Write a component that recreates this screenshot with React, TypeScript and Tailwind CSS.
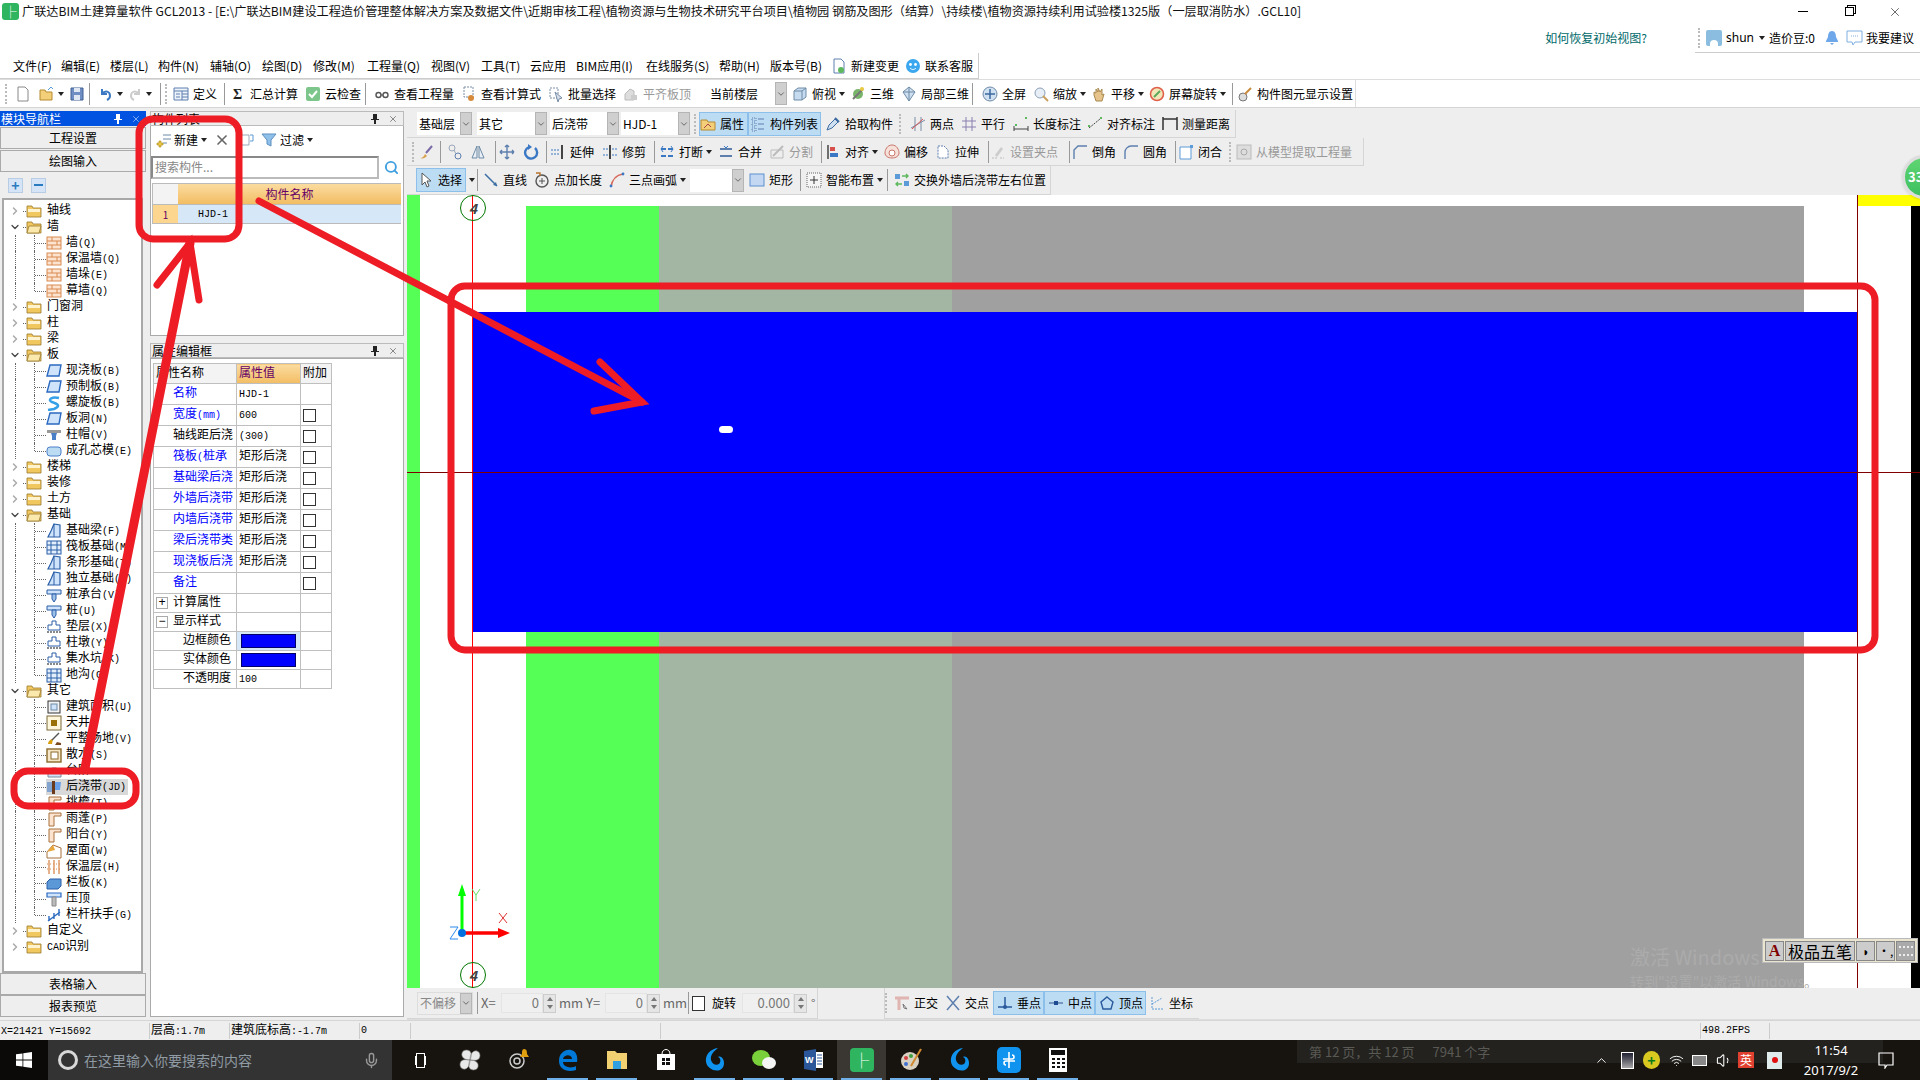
import type { ReactNode } from "react";
import { ChevronDown, ChevronRight, ChevronUp, Mic, Search, Volume1, Wifi, X } from "lucide-react";

const mono = "font-['Liberation_Mono','Noto_Sans_CJK_SC',monospace]";

// Latin runs are half the width of the CJK characters, like in the bitmap font of the app
function Sim({ text }: { text: string }) {
    return (
        <>
            {text.split(/([\x00-\x7f]+)/).map((p, i) =>
                /^[\x00-\x7f]+$/.test(p) ? <span key={i} className="text-[10px]">{p}</span> : p
            )}
        </>
    );
}

function Caret() {
    return <span className="ml-[3px] w-0 h-0 border-x-[3px] border-x-transparent border-t-[4px] border-t-[#222] shrink-0"></span>;
}

function Grip() {
    return <span className="block w-[3px] h-[20px] border-l-2 border-dotted border-[#bbb] shrink-0"></span>;
}

function Sep({ className = "" }: { className?: string }) {
    return <span className={`h-[22px] w-px bg-[#999] shrink-0 ${className}`}></span>;
}

// kleine Toolbar-Icons, nur grob nachgezeichnet
function Icon({ name }: { name: string }) {
    const common = { width: 16, height: 16, viewBox: "0 0 16 16", className: "shrink-0" };
    switch (name) {
        case "new": return <svg {...common}><path d="M3 1h7l3 3v11H3z" fill="#fff" stroke="#888" /></svg>;
        case "open": return <svg {...common}><path d="M1 4h5l1 2h6v8H1z" fill="#f3cf79" stroke="#b58a30" /><path d="M9 4l3-3 2 2" fill="none" stroke="#5a9bd8" /></svg>;
        case "save": return <svg {...common}><path d="M2 2h12v12H2z" fill="#6f8fc4" stroke="#3f5f94" /><path d="M5 2h6v4H5zM5 9h6v5H5z" fill="#dfe7f3" /></svg>;
        case "undo": return <svg {...common}><path d="M4 3v5h5M4 8c3-4 8-3 8 2 0 2-1 3-3 4" fill="none" stroke="#3b78c4" strokeWidth="2" /></svg>;
        case "redo": return <svg {...common}><path d="M12 3v5H7M12 8C9 4 4 5 4 10c0 2 1 3 3 4" fill="none" stroke="#ccc" strokeWidth="2" /></svg>;
        case "table": return <svg {...common}><path d="M1 2h14v12H1z" fill="#eef3fa" stroke="#5d7fae" /><path d="M1 5h14M9 5v9M9 8h6M9 11h6M3 8h4M3 11h4" stroke="#5d7fae" /></svg>;
        case "sigma": return <svg {...common}><text x="3" y="13" fontSize="14" fontWeight="700" fill="#222" fontFamily="Liberation Serif">Σ</text></svg>;
        case "check": return <svg {...common}><rect x="1" y="1" width="14" height="14" rx="2" fill="#7cc68b" /><path d="M4 8l3 3 5-6" fill="none" stroke="#fff" strokeWidth="2" /></svg>;
        case "glasses": return <svg {...common}><circle cx="4.5" cy="9" r="2.5" fill="none" stroke="#555" strokeWidth="1.4" /><circle cx="11.5" cy="9" r="2.5" fill="none" stroke="#555" strokeWidth="1.4" /><path d="M7 9h2" stroke="#555" /></svg>;
        case "doc": return <svg {...common}><path d="M3 1h9v10H3z" fill="#fff" stroke="#7a8ea8" strokeDasharray="2 1" /><circle cx="10" cy="12" r="3" fill="#d68a3c" /></svg>;
        case "batch": return <svg {...common}><path d="M2 2h8v10H2z" fill="none" stroke="#7a8ea8" strokeDasharray="2 1" /><path d="M7 6l7 6-3 1-1 3z" fill="#d5dee9" stroke="#7a8ea8" /></svg>;
        case "flat": return <svg {...common}><path d="M2 14V8l5-5 4 2v9z" fill="#ddd" stroke="#bbb" /><path d="M8 9h6v5H8z" fill="#ccc" /></svg>;
        case "box": return <svg {...common}><path d="M2 5l4-3h8v9l-4 3H2z" fill="#c6dbef" stroke="#6e8ba6" /><path d="M2 5h8v9M10 5l4-3" fill="none" stroke="#6e8ba6" /></svg>;
        case "three": return <svg {...common}><circle cx="8" cy="8" r="5" fill="#78b56a" /><path d="M3 13l10-10" stroke="#777" strokeWidth="2" /><circle cx="12" cy="3" r="2" fill="#e8c840" /></svg>;
        case "local": return <svg {...common}><path d="M8 1l6 5-6 9-6-9z" fill="#cfe0f1" stroke="#6e8ba6" /><path d="M2 6h12M8 1v14" stroke="#6e8ba6" /></svg>;
        case "full": return <svg {...common}><circle cx="8" cy="8" r="7" fill="#cfe0f1" stroke="#6e8ba6" /><path d="M8 3v10M3 8h10" stroke="#3c6aa0" strokeWidth="1.5" /></svg>;
        case "zoom": return <svg {...common}><circle cx="7" cy="7" r="5" fill="#e8eef5" stroke="#8aa0b8" /><path d="M10 10l5 5" stroke="#c9a05a" strokeWidth="2" /></svg>;
        case "pan": return <svg {...common}><path d="M3 9V6l2 1V3l2 3V2l2 4 2-3v6l2-1-2 7H5z" fill="#e6c48c" stroke="#a98950" /></svg>;
        case "rotate": return <svg {...common}><circle cx="8" cy="8" r="6.5" fill="#f2e6b8" stroke="#e0604c" strokeWidth="1.6" /><path d="M5 11l6-6" stroke="#5aa85a" strokeWidth="2" /></svg>;
        case "settings": return <svg {...common}><circle cx="6" cy="11" r="4" fill="#ddd" stroke="#777" /><path d="M8 8l6-6" stroke="#c98a3c" strokeWidth="2" /></svg>;
        case "prop": return <svg {...common}><path d="M1 4h6l1 2h7v8H1z" fill="#f3cf79" stroke="#b58a30" /><path d="M4 12l4-4 3 3" fill="none" stroke="#a44" /></svg>;
        case "list": return <svg {...common}><path d="M2 2h4v3H2zM2 7h4v3H2zM2 12h4v3H2z" fill="none" stroke="#5d7fae" strokeDasharray="1 1" /><path d="M8 3h6M8 8h6M8 13h6" stroke="#5d7fae" /></svg>;
        case "pick": return <svg {...common}><path d="M2 14l2-5 6-6 3 3-6 6z" fill="#cfe0f1" stroke="#3c6aa0" /><path d="M10 2l4 4" stroke="#3c6aa0" strokeWidth="2" /></svg>;
        case "twopt": return <svg {...common}><path d="M5 1v14M11 1v14M1 12l14-8" stroke="#7a8ea8" /><path d="M2 13L13 3" stroke="#d8504c" /></svg>;
        case "para": return <svg {...common}><path d="M5 1v14M11 1v14M1 5h14M1 11h14" stroke="#8a7fb0" /></svg>;
        case "dim": return <svg {...common}><path d="M1 13h14M1 10v5M15 10v5" stroke="#444" /><path d="M2 8h2v2H2zM12 1h2v2h-2z" fill="#5cb85c" /></svg>;
        case "align": return <svg {...common}><path d="M2 12L13 3" stroke="#444" strokeDasharray="2 1" /><path d="M1 9h2v2H1zM13 1h2v2h-2z" fill="#5cb85c" /></svg>;
        case "measure": return <svg {...common}><path d="M1 3h14M1 1v13M15 1v13" stroke="#333" strokeWidth="1.5" /></svg>;
        case "brush": return <svg {...common}><path d="M2 14c3 0 4-2 5-4l2 2c-2 2-4 3-7 2z" fill="#d8a24c" /><path d="M8 9l6-7" stroke="#7a6aa8" strokeWidth="2" /></svg>;
        case "copy": return <svg {...common}><circle cx="5" cy="4" r="3" fill="none" stroke="#9aa8ba" /><circle cx="11" cy="12" r="3" fill="none" stroke="#5d7fae" /><path d="M7 6l2 4" stroke="#9aa8ba" /></svg>;
        case "mirror": return <svg {...common}><path d="M7 2v12H2zM9 2v12h5z" fill="#e8eef5" stroke="#6e8ba6" /></svg>;
        case "move": return <svg {...common}><path d="M8 1v14M1 8h14M8 1L6 3M8 1l2 2M8 15l-2-2M8 15l2-2M1 8l2-2M1 8l2 2M15 8l-2-2M15 8l-2 2" fill="none" stroke="#5d7fae" strokeWidth="1.4" /></svg>;
        case "cw": return <svg {...common}><path d="M12 4a6 6 0 1 1-6-1" fill="none" stroke="#3b78c4" strokeWidth="2.4" /><path d="M5 0v6l4-3z" fill="#3b78c4" /></svg>;
        case "extend": return <svg {...common}><path d="M1 6h8M1 10h8" stroke="#3b78c4" strokeDasharray="2 1" /><path d="M12 1v14" stroke="#444" strokeWidth="2" /></svg>;
        case "trim": return <svg {...common}><path d="M1 5h14M1 11h14" stroke="#3b78c4" strokeDasharray="2 1" /><path d="M8 1v14" stroke="#444" strokeWidth="2" /></svg>;
        case "break": return <svg {...common}><path d="M2 5h12M2 12h12" stroke="#3b78c4" strokeWidth="2" strokeDasharray="5 2" /><path d="M4 2L2 5l2 3M12 2l2 3-2 3" fill="none" stroke="#3b78c4" /></svg>;
        case "merge": return <svg {...common}><path d="M2 5h12M2 12h12" stroke="#5d7fae" strokeWidth="2" /><path d="M6 2l2 2 2-2" fill="none" stroke="#3b78c4" /></svg>;
        case "split": return <svg {...common}><path d="M2 14V6h12v8z" fill="none" stroke="#bbb" /><path d="M4 12L14 2" stroke="#bbb" strokeWidth="2" /></svg>;
        case "alignl": return <svg {...common}><path d="M3 1v14" stroke="#444" strokeWidth="1.5" /><path d="M5 3h5v4H5z" fill="#d8504c" /><path d="M5 9h8v4H5z" fill="#3b78c4" /></svg>;
        case "offset": return <svg {...common}><path d="M8 1c5 0 7 5 7 8 0 3-3 5-7 5s-7-2-7-5c0-3 2-8 7-8z" fill="#f6e0da" stroke="#c9766a" /><circle cx="8" cy="9" r="3" fill="#fff" stroke="#c9766a" /></svg>;
        case "stretch": return <svg {...common}><path d="M3 2h6l4 4v8H3z" fill="#fff" stroke="#5d7fae" strokeDasharray="2 1" /></svg>;
        case "grip": return <svg {...common}><path d="M2 14h5M10 14h4" stroke="#bbb" strokeDasharray="2 1" /><path d="M5 11l6-8 2 2-6 8z" fill="#ccc" /></svg>;
        case "chamfer": return <svg {...common}><path d="M2 15V6l4-4h9" fill="none" stroke="#5d7fae" strokeWidth="1.4" /></svg>;
        case "round": return <svg {...common}><path d="M2 15V8c0-3 3-6 6-6h7" fill="none" stroke="#5d7fae" strokeWidth="1.4" /></svg>;
        case "close": return <svg {...common}><path d="M2 3h11v12H2z" fill="#fff" stroke="#5d9bd8" /><path d="M12 1h3v3h-3z" fill="#5d9bd8" /></svg>;
        case "model": return <svg {...common}><rect x="1" y="1" width="14" height="14" fill="#ddd" stroke="#bbb" /><circle cx="8" cy="8" r="3" fill="none" stroke="#aaa" /></svg>;
        case "cursor": return <svg {...common}><path d="M4 1v12l3-3 2 5 2-1-2-5h4z" fill="#fff" stroke="#555" /></svg>;
        case "line": return <svg {...common}><path d="M2 2l12 12" stroke="#3b6ea5" strokeWidth="1.5" /><path d="M14 14l-4-1 3-3z" fill="#3b6ea5" /></svg>;
        case "ptlen": return <svg {...common}><circle cx="8" cy="9" r="6" fill="none" stroke="#555" strokeWidth="1.4" /><path d="M5 9h6M8 6v6" stroke="#555" /><path d="M2 1h4v3" fill="none" stroke="#b8732e" strokeWidth="1.4" /></svg>;
        case "arc": return <svg {...common}><path d="M2 15C3 8 7 3 14 2" fill="none" stroke="#d86a5c" strokeWidth="1.5" /><circle cx="2" cy="14" r="1.4" fill="#3b78c4" /><circle cx="14" cy="2" r="1.4" fill="#3b78c4" /></svg>;
        case "rect": return <svg {...common}><rect x="1" y="2" width="14" height="12" fill="#c4d7f2" stroke="#5d8fd0" /></svg>;
        case "smart": return <svg {...common}><rect x="1" y="1" width="14" height="14" fill="#f5f5f5" stroke="#666" strokeDasharray="1 1" /><path d="M8 4v8M4 8h8" stroke="#333" /></svg>;
        case "swap": return <svg {...common}><path d="M1 2h5v5H1z" fill="#5d9bd8" /><path d="M10 9h5v5h-5z" fill="#5d9bd8" /><path d="M8 4h6M12 2l2 2-2 2" fill="none" stroke="#5cb85c" strokeWidth="1.4" /><path d="M8 12H2M4 10l-2 2 2 2" fill="none" stroke="#5cb85c" strokeWidth="1.4" /></svg>;
        case "ortho": return <svg {...common}><path d="M1 3h14M5 3v12" stroke="#e0b4b0" strokeWidth="3" /><path d="M9 9l4 5-3-1z" fill="#fff" stroke="#777" /></svg>;
        case "cross": return <svg {...common}><path d="M2 1l12 14M14 1L2 15" stroke="#5d7fae" strokeWidth="1.5" /></svg>;
        case "perp": return <svg {...common}><path d="M1 12h14M8 2v10" stroke="#2a5a9c" strokeWidth="1.5" /><circle cx="8" cy="12" r="2" fill="#2a5a9c" /></svg>;
        case "mid": return <svg {...common}><path d="M1 8h14" stroke="#5d7fae" strokeWidth="1.5" /><rect x="6" y="6" width="4" height="4" fill="#1e4a94" /></svg>;
        case "vertex": return <svg {...common}><path d="M8 2l6 5-2 7H4L2 7z" fill="none" stroke="#2a5a9c" strokeWidth="1.4" /></svg>;
        case "coord": return <svg {...common}><path d="M3 2v12h11" fill="none" stroke="#5d9bd8" strokeDasharray="2 1" /><path d="M3 9l10-6" stroke="#5d9bd8" strokeDasharray="2 1" /></svg>;
        case "newfile": return <svg {...common}><path d="M3 1h7l3 3v11H3z" fill="#fff" stroke="#5d7fae" /><circle cx="10" cy="12" r="3" fill="#5cb85c" /></svg>;
        case "service": return <svg {...common}><circle cx="8" cy="8" r="7" fill="#3ba7ee" /><circle cx="5.5" cy="6.5" r="1.4" fill="#fff" /><circle cx="10.5" cy="6.5" r="1.4" fill="#fff" /><path d="M5 10c2 2 4 2 6 0" fill="none" stroke="#fff" /></svg>;
        default: return <svg {...common}><rect x="2" y="2" width="12" height="12" fill="#ddd" stroke="#999" /></svg>;
    }
}

function Tool({ icon, label, className = "", caret, gray, active }: { icon: string; label?: string; className?: string; caret?: boolean; gray?: boolean; active?: boolean }) {
    return (
        <div className={`flex items-center h-[24px] shrink-0 whitespace-nowrap ${active ? "bg-[#bcdcf4] outline outline-[#8cc0ea] outline-offset-[-1px]" : ""} ${gray ? "text-[#999]" : "text-black"} ${className}`}>
            <span className="w-[20px] shrink-0"><Icon name={icon} /></span>
            {label}
            {caret && <Caret />}
        </div>
    );
}

function Select({ label, className = "", gray }: { label: string; className?: string; gray?: boolean }) {
    return (
        <div className={`h-[23px] flex items-center justify-between shrink-0 whitespace-nowrap ${gray ? "bg-[#eee] text-[#888]" : "bg-white"} ${className}`}>
            <span className="pl-[2px]">{label}</span>
            <span className="h-full w-[12px] shrink-0 bg-[#cfcfcf] border border-[#b5b5b5] flex items-center justify-center"><ChevronDown size={10} color="#555" /></span>
        </div>
    );
}

function TitleBar() {
    return (
        <div className="h-[53px] bg-white shrink-0 relative">
            <div className="h-[23px] flex items-center">
                <div className="w-[17px] h-[17px] mx-[2px] rounded-[3px] bg-[#2fb560] text-white flex items-center justify-center text-[12px] font-bold shrink-0">├</div>
                <span className="ml-[1px] text-[12.17px] text-[#111] whitespace-nowrap">广联达BIM土建算量软件 GCL2013 - [E:\广联达BIM建设工程造价管理整体解决方案及数据文件\近期审核工程\植物资源与生物技术研究平台项目\植物园 钢筋及图形（结算）\持续楼\植物资源持续利用试验楼1325版（一层取消防水）.GCL10]</span>
                <div className="ml-auto mr-[2px] flex items-center">
                    <span className="w-[46px] flex justify-center"><span className="w-[10px] h-px bg-black"></span></span>
                    <span className="w-[46px] flex justify-center"><span className="w-[9px] h-[9px] border border-black shadow-[2px_-2px_0_-1px_#fff,2px_-2px_0_0_#000]"></span></span>
                    <span className="w-[46px] flex justify-center"><X size={14} strokeWidth={1} color="#000" /></span>
                </div>
            </div>
            <div className="h-[30px] flex items-center justify-end">
                <span className="text-[12px] text-[#006a6a] mr-[48px]">如何恢复初始视图?</span>
                <div className="w-[225px] h-[30px] flex items-center border-b border-[#ccc] pl-[3px] text-[12px] whitespace-nowrap">
                    <Grip />
                    <span className="ml-[5px] w-[16px] h-[16px] rounded-[2px] bg-[#8abde0] flex items-end justify-center shrink-0"><span className="w-[8px] h-[6px] bg-white rounded-t-sm"></span></span>
                    <span className="ml-[4px] w-[30px] font-['Noto_Sans']">shun</span>
                    <Caret />
                    <span className="ml-[4px] w-[47px]">造价豆:0</span>
                    <svg width="14" height="16" viewBox="0 0 14 16" className="ml-[9px] shrink-0"><path d="M7 1c3 0 4 3 4 6l2 4v1H1v-1l2-4c0-3 1-6 4-6zM5 13h4l-2 2z" fill="#6fa8ea" /></svg>
                    <svg width="17" height="16" viewBox="0 0 17 16" className="ml-[7px] shrink-0"><path d="M1 1h15v11H9l-2 3-1-3H1z" fill="#fff" stroke="#7fb0e0" /><path d="M5 6h7" stroke="#7fb0e0" strokeDasharray="1 1" /></svg>
                    <span className="ml-[3px]">我要建议</span>
                </div>
            </div>
        </div>
    );
}

const menus: [string, string][] = [
    ["文件(F)", "ml-[13px] w-[48px]"], ["编辑(E)", "w-[49px]"], ["楼层(L)", "w-[48px]"], ["构件(N)", "w-[52px]"], ["辅轴(O)", "w-[52px]"],
    ["绘图(D)", "w-[51px]"], ["修改(M)", "w-[54px]"], ["工程量(Q)", "w-[64px]"], ["视图(V)", "w-[50px]"], ["工具(T)", "w-[49px]"],
    ["云应用", "w-[46px]"], ["BIM应用(I)", "w-[70px]"], ["在线服务(S)", "w-[73px]"], ["帮助(H)", "w-[51px]"], ["版本号(B)", "w-[61px]"],
];

function MenuBar() {
    return (
        <div className="h-[26px] bg-white shrink-0 flex items-center text-[12px]">
            <div className="h-full w-[979px] flex items-center border-r border-b border-[#ccc] shrink-0">
                {menus.map(([text, cls]) => <span key={text} className={`shrink-0 whitespace-nowrap ${cls}`}>{text}</span>)}
                <Tool icon="newfile" label="新建变更" className="w-[74px]" />
                <Tool icon="service" label="联系客服" className="w-[70px]" />
            </div>
        </div>
    );
}

function MainToolbar() {
    return (
        <div className="h-[29px] bg-white shrink-0 flex items-center text-[12px] border-t border-[#ddd] border-b border-b-[#d5d5d5]">
            <span className="ml-[5px] w-[9px]"><Grip /></span>
            <span className="ml-[1px] w-[24px]"><Icon name="new" /></span>
            <span className="w-[30px] flex items-center"><Icon name="open" /><Caret /></span>
            <span className="w-[20px]"><Icon name="save" /></span>
            <Sep className="mr-[8px]" />
            <span className="w-[29px] flex items-center"><Icon name="undo" /><Caret /></span>
            <span className="w-[29px] flex items-center"><Icon name="redo" /><Caret /></span>
            <Sep className="ml-[4px] mr-[4px]" />
            <Grip />
            <Tool icon="table" label="定义" className="ml-[5px] w-[51px]" />
            <Sep />
            <Tool icon="sigma" label="汇总计算" className="ml-[5px] w-[75px]" />
            <Tool icon="check" label="云检查" className="w-[60px]" />
            <Sep className="mr-[8px]" />
            <Tool icon="glasses" label="查看工程量" className="w-[87px]" />
            <Tool icon="doc" label="查看计算式" className="w-[87px]" />
            <Tool icon="batch" label="批量选择" className="w-[75px]" />
            <Tool icon="flat" label="平齐板顶" gray className="w-[77px]" />
            <Select label="当前楼层" className="ml-[8px] w-[79px]" />
            <span className="w-[5px]"></span>
            <Tool icon="box" label="俯视" caret className="w-[58px]" />
            <Tool icon="three" label="三维" className="w-[51px]" />
            <Tool icon="local" label="局部三维" className="w-[71px]" />
            <Sep className="mr-[9px]" />
            <Tool icon="full" label="全屏" className="w-[51px]" />
            <Tool icon="zoom" label="缩放" caret className="w-[58px]" />
            <Tool icon="pan" label="平移" caret className="w-[58px]" />
            <Tool icon="rotate" label="屏幕旋转" caret className="w-[83px]" />
            <Sep className="mr-[4px]" />
            <Tool icon="settings" label="构件图元显示设置" className="w-[118px]" />
            <span className="h-full w-px bg-[#ddd]"></span>
        </div>
    );
}

function DrawToolbars() {
    return (
        <div className="shrink-0 text-[12px] bg-[#eee]">
            <div className="h-[28px] w-[829px] flex items-center border-b border-r border-[#d5d5d5] pl-[10px]">
                <Select label="基础层" className="w-[55px]" />
                <Select label="其它" className="ml-[5px] w-[70px]" />
                <Select label="后浇带" className="ml-[3px] w-[69px]" />
                <Select label="HJD-1" className="ml-[2px] w-[69px]" />
                <span className="ml-[4px] w-[5px]"><Grip /></span>
                <Tool icon="prop" label="属性" active className="w-[49px] pl-[1px]" />
                <Tool icon="list" label="构件列表" active className="w-[73px] pl-[2px]" />
                <Tool icon="pick" label="拾取构件" className="ml-[4px] w-[74px]" />
                <span className="w-[11px]"><Grip /></span>
                <Tool icon="twopt" label="两点" className="w-[51px]" />
                <Tool icon="para" label="平行" className="w-[52px]" />
                <Tool icon="dim" label="长度标注" className="w-[74px]" />
                <Tool icon="align" label="对齐标注" className="w-[75px]" />
                <Tool icon="measure" label="测量距离" className="w-[72px]" />
            </div>
            <div className="h-[28px] w-[957px] flex items-center border-b border-r border-[#d5d5d5] pl-[5px]">
                <span className="w-[6px]"><Grip /></span>
                <span className="w-[22px]"><Icon name="brush" /></span>
                <Sep className="mr-[6px]" />
                <span className="w-[23px]"><Icon name="copy" /></span>
                <span className="w-[25px]"><Icon name="mirror" /></span>
                <Sep className="mr-[3px]" />
                <span className="w-[24px]"><Icon name="move" /></span>
                <span className="w-[23px]"><Icon name="cw" /></span>
                <Sep className="mr-[3px]" />
                <Tool icon="extend" label="延伸" className="w-[52px]" />
                <Tool icon="trim" label="修剪" className="w-[52px]" />
                <Sep className="mr-[4px]" />
                <Tool icon="break" label="打断" caret className="w-[59px]" />
                <Tool icon="merge" label="合并" className="w-[51px]" />
                <Tool icon="split" label="分割" gray className="w-[52px]" />
                <Sep className="mr-[3px]" />
                <Tool icon="alignl" label="对齐" caret className="w-[59px]" />
                <Tool icon="offset" label="偏移" className="w-[51px]" />
                <Tool icon="stretch" label="拉伸" className="w-[53px]" />
                <Sep className="mr-[1px]" />
                <Tool icon="grip" label="设置夹点" gray className="w-[79px]" />
                <Sep className="mr-[2px]" />
                <Tool icon="chamfer" label="倒角" className="w-[51px]" />
                <Tool icon="round" label="圆角" className="w-[52px]" />
                <Sep className="mr-[2px]" />
                <Tool icon="close" label="闭合" className="w-[51px]" />
                <span className="w-[7px]"><Grip /></span>
                <Tool icon="model" label="从模型提取工程量" gray className="w-[118px]" />
            </div>
            <div className="h-[29px] w-[644px] flex items-center border-b border-r border-[#d5d5d5] pl-[9px]">
                <Tool icon="cursor" label="选择" active className="w-[50px] pl-[2px]" />
                <Caret />
                <Sep className="ml-[2px] mr-[5px]" />
                <Tool icon="line" label="直线" className="w-[51px]" />
                <Tool icon="ptlen" label="点加长度" className="w-[75px]" />
                <Tool icon="arc" label="三点画弧" caret className="w-[81px]" />
                <Select label="" className="w-[54px]" />
                <span className="w-[5px]"></span>
                <Tool icon="rect" label="矩形" className="w-[51px]" />
                <Sep className="mr-[5px]" />
                <Tool icon="smart" label="智能布置" caret className="w-[81px]" />
                <Sep className="mr-[6px]" />
                <Tool icon="swap" label="交换外墙后浇带左右位置" className="w-[156px]" />
            </div>
        </div>
    );
}

function Folder({ open }: { open?: boolean }) {
    return (
        <svg width="16" height="14" viewBox="0 0 16 14" className="shrink-0">
            <path d="M1 2h5l1 2h8v9H1z" fill="#f1c75f" stroke="#9a7a2c" strokeWidth="0.8" />
            {open ? <path d="M3 6h12l-2 7H1z" fill="#fbe8ad" stroke="#9a7a2c" strokeWidth="0.8" /> : <path d="M2 5h12v3H2z" fill="#fdf3cf" />}
        </svg>
    );
}

function TreeIcon({ kind }: { kind: string }) {
    const c = { width: 16, height: 16, viewBox: "0 0 16 16", className: "shrink-0" };
    switch (kind) {
        case "brick": return <svg {...c}><rect x="1" y="2" width="14" height="12" fill="#fbe3cf" stroke="#d98a50" /><path d="M1 6h14M1 10h14M6 2v4M11 6v4M6 10v4" stroke="#d98a50" /></svg>;
        case "slab": return <svg {...c}><path d="M4 2h11l-2 11H1z" fill="#cfe3fa" stroke="#2a6ac0" strokeWidth="1.4" /></svg>;
        case "spiral": return <svg {...c}><path d="M13 3C6 1 1 5 6 7c6 2 9 4 2 7l-6 1" fill="none" stroke="#35a0e8" strokeWidth="2.5" /></svg>;
        case "hat": return <svg {...c}><path d="M1 3h14v3H1z" fill="#999" /><path d="M5 6h6l-1 3v4H6V9z" fill="#4a80c8" /></svg>;
        case "core": return <svg {...c}><rect x="1" y="4" width="14" height="9" rx="3" fill="#bcdcf4" stroke="#4a80c8" /></svg>;
        case "found": return <svg {...c}><path d="M8 1l6 1v12H2l3-6z" fill="#cfe3fa" stroke="#2a5fa8" strokeWidth="1.2" /><path d="M8 1v13" stroke="#2a5fa8" /></svg>;
        case "grid": return <svg {...c}><rect x="1" y="2" width="14" height="13" fill="#e2eefa" stroke="#2a5fa8" /><path d="M5 2v13M11 2v13M1 6h14M1 11h14" stroke="#2a5fa8" /></svg>;
        case "cap": return <svg {...c}><path d="M1 3h14v4H1z" fill="#cfe3fa" stroke="#2a5fa8" /><path d="M6 7h4v5l-2 3-2-3z" fill="#9cc0e8" stroke="#2a5fa8" /></svg>;
        case "layer": return <svg {...c}><path d="M6 2h4v4h4v5H2V6h4z" fill="#fff" stroke="#2a5fa8" /><path d="M1 13h14" stroke="#888" strokeWidth="2" strokeDasharray="2 1" /></svg>;
        case "area": return <svg {...c}><rect x="2" y="2" width="12" height="12" fill="#f3f3f3" stroke="#333" /><rect x="5" y="5" width="6" height="6" fill="#cfe3fa" stroke="#6a8aa8" /></svg>;
        case "well": return <svg {...c}><rect x="1" y="1" width="14" height="14" fill="#fff7dc" stroke="#7a6a3a" /><rect x="5" y="5" width="6" height="6" fill="#9a7008" /></svg>;
        case "shovel": return <svg {...c}><path d="M2 13c0-3 3-5 5-5l-1 5z" fill="#d8a010" /><path d="M6 9l7-7" stroke="#555" strokeWidth="1.5" /><path d="M9 14h6v-2l-4-1z" fill="#7a4a20" /></svg>;
        case "apron": return <svg {...c}><rect x="1" y="2" width="14" height="13" fill="#f6e6c8" stroke="#8a6a2a" strokeWidth="1.4" /><rect x="5" y="5" width="7" height="7" fill="#fff" stroke="#8a6a2a" /></svg>;
        case "jd": return <svg {...c}><path d="M1 3h6v10H1z" fill="#4a80c8" opacity="0.6" /><path d="M6 2h3v13H6z" fill="#6a3a1a" /><path d="M9 3h6l-1 8H9z" fill="#6aa0e8" /></svg>;
        case "step": return <svg {...c}><path d="M2 14V8h4V5h4l5 3v6z" fill="#cfe3fa" stroke="#7a8a9a" /></svg>;
        case "canopy": return <svg {...c}><path d="M3 2h12v3H8v10H3z" fill="#fbe3cf" stroke="#a8703a" /></svg>;
        case "roof": return <svg {...c}><path d="M1 9l6-7 8 3v10H1z" fill="#fff" stroke="#a8703a" /><path d="M1 9l6-7 2 5z" fill="#e8a83a" /></svg>;
        case "insul": return <svg {...c}><path d="M3 1v14M8 1v14M13 1v14" stroke="#d98a50" strokeWidth="1.3" /><path d="M1 5h14M1 10h14" stroke="#d98a50" strokeDasharray="1 2" /></svg>;
        case "parapet": return <svg {...c}><path d="M1 7l3-3h11v7l-3 3H1z" fill="#5a98d8" stroke="#2a5fa8" /></svg>;
        case "coping": return <svg {...c}><path d="M1 2h14v4H1z" fill="#cfe3fa" stroke="#2a6ac0" strokeWidth="1.2" /><path d="M6 6h4v9H6z" fill="#bbb" stroke="#888" /></svg>;
        default: return <svg {...c}><path d="M2 14l12-9M3 9v5M8 6v6M13 2v7" fill="none" stroke="#2a6ac0" strokeWidth="1.4" /></svg>;
    }
}

type Node = { t: string; k?: string; open?: boolean; sel?: boolean; last?: boolean };

const nodes: Node[] = [
    { t: "轴线" }, { t: "墙", open: true },
    { t: "墙(Q)", k: "brick" }, { t: "保温墙(Q)", k: "brick" }, { t: "墙垛(E)", k: "brick" }, { t: "幕墙(Q)", k: "brick", last: true },
    { t: "门窗洞" }, { t: "柱" }, { t: "梁" }, { t: "板", open: true },
    { t: "现浇板(B)", k: "slab" }, { t: "预制板(B)", k: "slab" }, { t: "螺旋板(B)", k: "spiral" }, { t: "板洞(N)", k: "slab" }, { t: "柱帽(V)", k: "hat" }, { t: "成孔芯模(E)", k: "core", last: true },
    { t: "楼梯" }, { t: "装修" }, { t: "土方" }, { t: "基础", open: true },
    { t: "基础梁(F)", k: "found" }, { t: "筏板基础(M)", k: "grid" }, { t: "条形基础(T)", k: "found" }, { t: "独立基础(D)", k: "found" }, { t: "桩承台(V)", k: "cap" }, { t: "桩(U)", k: "cap" }, { t: "垫层(X)", k: "layer" }, { t: "柱墩(Y)", k: "layer" }, { t: "集水坑(K)", k: "layer" }, { t: "地沟(G)", k: "grid", last: true },
    { t: "其它", open: true },
    { t: "建筑面积(U)", k: "area" }, { t: "天井", k: "well" }, { t: "平整场地(V)", k: "shovel" }, { t: "散水(S)", k: "apron" }, { t: "台阶", k: "step" }, { t: "后浇带(JD)", k: "jd", sel: true }, { t: "挑檐(T)", k: "canopy" }, { t: "雨蓬(P)", k: "canopy" }, { t: "阳台(Y)", k: "canopy" }, { t: "屋面(W)", k: "roof" }, { t: "保温层(H)", k: "insul" }, { t: "栏板(K)", k: "parapet" }, { t: "压顶", k: "coping" }, { t: "栏杆扶手(G)", k: "rail", last: true },
    { t: "自定义" }, { t: "CAD识别" },
];

function TreeRow({ n }: { n: Node }) {
    if (n.k) {
        return (
            <div className="h-[16px] relative flex items-center">
                <span className="absolute left-[15px] top-0 h-full border-l border-dotted border-[#666]"></span>
                <span className={`absolute left-[34px] top-0 border-l border-dotted border-[#666] ${n.last ? "h-[8px]" : "h-full"}`}></span>
                <span className="ml-[35px] w-[11px] border-t border-dotted border-[#666]"></span>
                <span className={`flex items-center h-[16px] pr-[2px] ${n.sel ? "bg-[#d9d9d9]" : ""}`}>
                    <TreeIcon kind={n.k} />
                    <span className={`ml-[4px] whitespace-nowrap text-[12px] text-black ${mono}`}><Sim text={n.t} /></span>
                </span>
            </div>
        );
    }
    return (
        <div className="h-[16px] flex items-center">
            <span className="ml-[9px] w-[14px] flex">
                {n.open ? <ChevronDown size={12} color="#444" strokeWidth={2.5} /> : <ChevronRight size={12} color="#aaa" strokeWidth={3} />}
            </span>
            <span className="w-[3px] border-t border-dotted border-[#666]"></span>
            <Folder open={n.open} />
            <span className={`ml-[5px] whitespace-nowrap text-[12px] text-black ${mono}`}><Sim text={n.t} /></span>
        </div>
    );
}

function PanelHeader({ title, blue }: { title: string; blue?: boolean }) {
    return (
        <div className={`h-[15px] flex items-center shrink-0 text-[12px] leading-none ${blue ? "bg-[#0052e0] text-white" : "bg-[#eee] text-black border border-[#bbb]"}`}>
            <span className="ml-[1px]">{title}</span>
            <span className="ml-auto flex items-center gap-[9px] pr-[5px]">
                <svg width="8" height="10" viewBox="0 0 8 10"><path d="M2 0h4v5h2v1H5v4H3V6H0V5h2z" fill={blue ? "#fff" : "#222"} /></svg>
                <X size={10} strokeWidth={1.2} color={blue ? "#fff" : "#222"} />
            </span>
        </div>
    );
}

function NavButton({ label }: { label: string }) {
    return <div className="h-[22px] flex items-center justify-center bg-[#eee] border border-[#aaa] text-[12px] shrink-0">{label}</div>;
}

function LeftNav() {
    return (
        <div className="w-[146px] mr-[4px] shrink-0 flex flex-col pt-[3px]">
            <PanelHeader title="模块导航栏" blue />
            <div className="mt-[1px]"><NavButton label="工程设置" /></div>
            <div className="mt-[1px]"><NavButton label="绘图输入" /></div>
            <div className="h-[26px] flex items-center pl-[8px] gap-[8px] shrink-0">
                <span className="w-[15px] h-[15px] bg-[#d5e5f7] border border-[#b8cce4] text-[#2a7ac0] font-bold flex items-center justify-center text-[14px] leading-none">+</span>
                <span className="w-[15px] h-[15px] bg-[#d5e5f7] border border-[#b8cce4] flex items-center justify-center"><span className="w-[9px] h-[2px] bg-[#2a7ac0]"></span></span>
            </div>
            <div className="flex-1 bg-white border-2 border-[#a8a8a8] overflow-hidden ml-[2px] mr-[3px]">
                <div className="h-[3px]"></div>
                <div className="-ml-[4px]">
                    {nodes.map(n => <TreeRow key={n.t} n={n} />)}
                </div>
            </div>
            <NavButton label="表格输入" />
            <NavButton label="报表预览" />
            <div className="h-[3px] shrink-0"></div>
        </div>
    );
}

function ComponentList() {
    return (
        <div className="h-[225px] flex flex-col shrink-0">
            <PanelHeader title="构件列表" />
            <div className="flex-1 bg-white border-x border-b border-[#aaa] flex flex-col">
                <div className="h-[28px] flex items-center text-[12px] shrink-0 pl-[5px]">
                    <svg width="16" height="16" viewBox="0 0 16 16"><path d="M7 3h8M7 7h8M7 11h4" stroke="#6a8aa8" /><path d="M3 9h2v2h2v2H5v2H3v-2H1v-2h2z" fill="#e8c840" stroke="#a88820" strokeWidth="0.6" /></svg>
                    <span className="ml-[2px]">新建</span>
                    <Caret />
                    <X size={16} strokeWidth={2.5} color="#666" className="ml-[7px]" />
                    <svg width="16" height="16" viewBox="0 0 16 16" className="ml-[9px]"><path d="M2 3h8v10H2z" fill="#fff" stroke="#9aa8ba" /><path d="M11 3h3v6h-3" fill="none" stroke="#5d9bd8" /></svg>
                    <svg width="16" height="16" viewBox="0 0 16 16" className="ml-[6px]"><path d="M1 2h14l-5 6v6l-4-2V8z" fill="#8fc0ea" stroke="#5d8fc0" /></svg>
                    <span className="ml-[3px]">过滤</span>
                    <Caret />
                </div>
                <div className="h-[26px] flex items-center shrink-0 pl-[0px]">
                    <div className="w-[228px] h-[23px] border-2 border-[#888] border-r-[#bbb] border-b-[#bbb] text-[12px] text-[#888] flex items-center pl-[2px]">搜索构件...</div>
                    <Search size={15} color="#3f9fe0" strokeWidth={3} className="ml-[5px]" />
                </div>
                <div className="mt-[3px] ml-[1px] mr-[2px] border-l border-t border-[#bbb] text-[12px]">
                    <div className="h-[20px] flex">
                        <span className="w-[25px] bg-[#f3f3f3]"></span>
                        <span className="flex-1 bg-gradient-to-b from-[#fbdca0] to-[#f2bd62] text-[#660066] flex items-center justify-center">构件名称</span>
                    </div>
                    <div className="h-[20px] flex border-t border-b border-[#bbb]">
                        <span className="w-[25px] bg-[#fcd68f] text-[#660066] flex items-center justify-center"><Sim text="1" /></span>
                        <span className={`flex-1 bg-[#d6e8f7] flex items-center pl-[20px] ${mono}`}><Sim text="HJD-1" /></span>
                    </div>
                </div>
            </div>
        </div>
    );
}

const blueRows: [string, string, boolean, boolean][] = [
    ["名称", "HJD-1", true, false], ["宽度(mm)", "600", true, true], ["轴线距后浇", "(300)", false, true], ["筏板(桩承", "矩形后浇", true, true],
    ["基础梁后浇", "矩形后浇", true, true], ["外墙后浇带", "矩形后浇", true, true], ["内墙后浇带", "矩形后浇", true, true], ["梁后浇带类", "矩形后浇", true, true],
    ["现浇板后浇", "矩形后浇", true, true], ["备注", "", true, true],
];

function Check() {
    return <span className="inline-block w-[13px] h-[13px] border border-[#333] bg-white align-middle"></span>;
}

function ExpandBox({ sign }: { sign: string }) {
    return <span className="w-[12px] h-[12px] border border-[#aaa] flex items-center justify-center text-[12px] leading-none ml-[2px] shrink-0">{sign}</span>;
}

function PropertyPanel() {
    const cell = "border border-[#bfbfbf] p-0";
    return (
        <div className="flex-1 flex flex-col min-h-0 mt-[7px]">
            <PanelHeader title="属性编辑框" />
            <div className="flex-1 bg-white border border-[#aaa] pl-[2px] pt-[4px]">
                <table className={`border-collapse text-[12px] table-fixed w-[178px] ${mono}`}>
                    <tbody>
                        <tr className="h-[20px]">
                            <td className={`${cell} w-[83px] bg-[#f3f3f3] pl-[2px]`}>属性名称</td>
                            <td className={`${cell} w-[64px] bg-gradient-to-b from-[#fbdca0] to-[#f2bd62] text-[#660066] pl-[2px]`}>属性值</td>
                            <td className={`${cell} w-[31px] bg-[#f3f3f3] pl-[2px]`}>附加</td>
                        </tr>
                        {blueRows.map(([name, val, blue, chk]) => (
                            <tr key={name} className="h-[21px]">
                                <td className={`${cell} pl-[19px] whitespace-nowrap overflow-hidden ${blue ? "text-[#0000ff]" : "text-black"}`}><Sim text={name} /></td>
                                <td className={`${cell} pl-[2px] whitespace-nowrap overflow-hidden`}><Sim text={val} /></td>
                                <td className={`${cell} pl-[2px] leading-none`}>{chk && <Check />}</td>
                            </tr>
                        ))}
                        <tr className="h-[19px]">
                            <td className={cell}><span className="flex items-center gap-[5px]"><ExpandBox sign="+" />计算属性</span></td>
                            <td className={cell}></td><td className={cell}></td>
                        </tr>
                        <tr className="h-[19px]">
                            <td className={cell}><span className="flex items-center gap-[5px]"><ExpandBox sign="−" />显示样式</span></td>
                            <td className={cell}></td><td className={cell}></td>
                        </tr>
                        {["边框颜色", "实体颜色"].map((n, i) => (
                            <tr key={n} className="h-[19px]">
                                <td className={`${cell} pl-[29px]`}>{n}</td>
                                <td className={`${cell} px-[4px] ${i === 0 ? "bg-[#d6e8f7]" : ""}`}><span className="block h-[14px] bg-[#0000ff] border border-[#000066]"></span></td>
                                <td className={cell}></td>
                            </tr>
                        ))}
                        <tr className="h-[19px]">
                            <td className={`${cell} pl-[29px]`}>不透明度</td>
                            <td className={`${cell} pl-[2px]`}><Sim text="100" /></td>
                            <td className={cell}></td>
                        </tr>
                    </tbody>
                </table>
            </div>
        </div>
    );
}

function CenterPanels() {
    return (
        <div className="w-[254px] mr-[3px] shrink-0 flex flex-col pt-[3px]">
            <ComponentList />
            <PropertyPanel />
            <div className="h-[3px] shrink-0"></div>
        </div>
    );
}

function AxisMark({ className }: { className: string }) {
    return (
        <span className={`absolute w-[26px] h-[26px] rounded-full border border-[#007700] flex items-center justify-center text-[14px] font-bold text-[#444] italic ${className}`}>4</span>
    );
}

function Canvas() {
    return (
        <div className="relative flex-1 flex min-h-0 overflow-hidden bg-white">
            <div className="w-[13px] bg-[#55ff55] shrink-0"></div>
            <div className="w-[106px] shrink-0"></div>
            <div className="flex pt-[11px] shrink-0">
                <div className="w-[133px] bg-[#55ff55]"></div>
                <div className="w-[293px] bg-[#a3b5a3]"></div>
                <div className="w-[852px] bg-[#a0a0a0]"></div>
            </div>
            <div className="w-[53px] shrink-0"></div>
            <div className="flex-1 flex flex-col">
                <div className="h-[11px] bg-[#ffff00] shrink-0"></div>
                <div className="flex-1 flex">
                    <div className="w-[54px]"></div>
                    <div className="flex-1 bg-black"></div>
                </div>
            </div>

            {/* Blue slab and grid lines lie over the bands */}
            <div className="absolute left-[66px] top-[117px] w-[1384px] h-[320px] bg-[#0000ff]"></div>
            <div className="absolute left-[312px] top-[231px] w-[14px] h-[7px] rounded-full bg-white"></div>
            <div className="absolute left-[65px] top-0 bottom-0 w-px bg-[#ff0000]"></div>
            <div className="absolute left-[1450px] top-0 bottom-0 w-px bg-[#800000]"></div>
            <div className="absolute left-0 right-0 top-[277px] h-px bg-[#800000]"></div>
            <AxisMark className="left-[53px] top-0 bg-transparent" />
            <AxisMark className="left-[53px] top-[767px] bg-transparent" />

            <svg width="80" height="70" viewBox="0 0 80 70" className="absolute left-[41px] top-[688px]">
                <path d="M14 6v46" stroke="#00ff00" strokeWidth="3" />
                <path d="M14 1l4 12h-8z" fill="#00ff00" />
                <path d="M16 50h38" stroke="#ff0000" strokeWidth="3.5" />
                <path d="M62 50l-12-5v10z" fill="#ff0000" />
                <circle cx="14" cy="50" r="4" fill="#0070e0" />
                <path d="M51 30l8 10M59 30l-8 10" stroke="#e03030" />
                <path d="M2 44h8l-8 12h8" fill="none" stroke="#2a8aee" />
                <path d="M24 6l4 6 4-6M28 12v6" fill="none" stroke="#66e066" />
            </svg>

            <div className="absolute left-[1223px] top-[752px] text-[20px] leading-none text-[#ababab] whitespace-nowrap">激活 Windows</div>
            <div className="absolute left-[1223px] top-[776px] text-[14px] leading-[20px] text-[#ababab] whitespace-nowrap">转到"设置"以激活 Windows。</div>

            <div className="absolute left-[1355px] top-[743px] w-[156px] h-[25px] bg-[#e8e4d0] border border-[#bbb] flex items-center gap-px px-[2px] text-[16px] text-black">
                <span className="w-[19px] h-[20px] bg-[#ccc] border border-[#888] flex items-center justify-center font-bold text-[#800000] font-['Liberation_Serif']">A</span>
                <span className="w-[71px] h-[20px] bg-[#ccc] border border-[#888] flex items-center justify-center whitespace-nowrap">极品五笔</span>
                <span className="w-[19px] h-[20px] bg-[#ccc] border border-[#888] flex items-center justify-center text-[12px]">◗</span>
                <span className="w-[19px] h-[20px] bg-[#ccc] border border-[#888] flex items-center justify-center text-[12px] leading-none">·,</span>
                <span className="w-[19px] h-[20px] bg-[#aaa] border border-[#888] flex items-center justify-center"><span className="w-[14px] h-[10px] border-y-2 border-dotted border-[#eee]"></span></span>
            </div>
        </div>
    );
}

function Spin() {
    return (
        <span className="w-[13px] h-[19px] bg-[#e5e5e5] border border-[#ccc] flex flex-col items-center justify-around shrink-0">
            <span className="w-0 h-0 border-x-[3px] border-x-transparent border-b-[4px] border-b-[#777]"></span>
            <span className="w-0 h-0 border-x-[3px] border-x-transparent border-t-[4px] border-t-[#777]"></span>
        </span>
    );
}

function NumField({ value, className }: { value: string; className: string }) {
    return <span className={`h-[20px] bg-[#f0f0f0] border border-[#e4e4e4] flex items-center justify-end pr-[3px] text-[#777] text-[13px] shrink-0 ${className}`}>{value}</span>;
}

function BottomBar() {
    return (
        <div className="h-[32px] shrink-0 bg-[#eee] flex items-center text-[12px] text-[#666] border-b border-[#ddd] whitespace-nowrap">
            <div className="h-full w-[411px] flex items-center border-r border-b border-[#d5d5d5] pl-[10px] shrink-0">
                <Select label="不偏移" gray className="w-[56px] border border-[#ddd]" />
                <Sep className="ml-[4px]" />
                <span className="ml-[3px] w-[20px] text-[13px]">X=</span>
                <NumField value="0" className="w-[42px]" />
                <Spin />
                <span className="ml-[3px] w-[24px] text-[13px]">mm</span>
                <span className="ml-[3px] w-[19px] text-[13px]">Y=</span>
                <NumField value="0" className="w-[42px]" />
                <Spin />
                <span className="ml-[3px] w-[24px] text-[13px]">mm</span>
                <Sep className="ml-[1px]" />
                <span className="ml-[3px] w-[13px] h-[15px] border border-[#333] bg-white shrink-0"></span>
                <span className="ml-[7px] w-[24px] text-black">旋转</span>
                <NumField value="0.000" className="ml-[6px] w-[52px]" />
                <Spin />
                <span className="ml-[4px]">°</span>
            </div>
            <div className="ml-[66px] h-full w-[315px] flex items-center border-l border-b border-[#d5d5d5] text-black shrink-0">
                <span className="w-[9px]"><Grip /></span>
                <Tool icon="ortho" label="正交" className="w-[51px]" />
                <Tool icon="cross" label="交点" className="w-[48px]" />
                <Tool icon="perp" label="垂点" active className="w-[51px] pl-[4px]" />
                <Tool icon="mid" label="中点" active className="w-[51px] pl-[4px]" />
                <Tool icon="vertex" label="顶点" active className="w-[51px] pl-[4px]" />
                <Tool icon="coord" label="坐标" className="ml-[3px] w-[50px]" />
            </div>
        </div>
    );
}

function StatusBar() {
    return (
        <div className={`h-[20px] shrink-0 bg-[#eee] border-t border-[#d5d5d5] flex items-center text-[12px] leading-none whitespace-nowrap ${mono}`}>
            <span className="w-[149px] pl-[1px]"><Sim text="X=21421 Y=15692" /></span>
            <span className="w-[80px] h-[16px] border-l border-[#ccc] pl-[1px] flex items-center"><span><Sim text="层高:1.7m" /></span></span>
            <span className="w-[130px] h-[16px] border-l border-[#ccc] pl-[1px] flex items-center"><span><Sim text="建筑底标高:-1.7m" /></span></span>
            <span className="w-[51px] h-[16px] border-l border-[#ccc] pl-[1px] flex items-center"><Sim text="0" /></span>
            <span className="w-[250px] h-[16px] border-l border-[#ccc]"></span>
            <span className="w-[1040px] h-[16px] border-l border-[#ccc]"></span>
            <span className="w-[69px] h-[16px] border-l border-[#ccc] pl-[1px] flex items-center"><Sim text="498.2FPS" /></span>
            <span className="h-[16px] border-l border-[#ccc]"></span>
        </div>
    );
}

function TaskIcon({ children, on, active }: { children: ReactNode; on?: boolean; active?: boolean }) {
    return (
        <div className={`w-[49px] h-full relative flex items-center justify-center shrink-0 ${active ? "bg-[#3a3732]" : ""}`}>
            {children}
            {on && <span className="absolute bottom-0 left-[4px] right-[4px] h-[2px] bg-[#6fb0e8]"></span>}
        </div>
    );
}

function Taskbar() {
    return (
        <div className="h-[40px] shrink-0 bg-[#17130e] flex items-center text-white">
            <div className="w-[48px] h-full bg-[#0b0a09] flex items-center justify-center shrink-0">
                <svg width="16" height="16" viewBox="0 0 16 16"><path d="M0 2.3l6.5-.9v6.2H0zM7.3 1.3L16 0v7.6H7.3zM0 8.4h6.5v6.2L0 13.7zM7.3 8.4H16V16l-8.7-1.2z" fill="#fff" /></svg>
            </div>
            <div className="w-[344px] h-full bg-[#333] flex items-center shrink-0">
                <span className="ml-[10px] w-[20px] h-[20px] rounded-full border-[3px] border-[#d8d8d8]"></span>
                <span className="ml-[6px] text-[14px] text-[#8f9aa3]">在这里输入你要搜索的内容</span>
                <Mic size={17} color="#999" className="ml-auto mr-[12px]" />
            </div>
            <div className="ml-[4px] flex h-full items-center">
                <TaskIcon><span className="w-[9px] h-[15px] border border-white shadow-[-4px_0_0_-3px_#fff,4px_0_0_-3px_#fff]"></span></TaskIcon>
                <TaskIcon><svg width="22" height="24" viewBox="0 0 22 24"><path d="M11 12C5 12 2 9 3 5s8-4 9 0c.5 2 0 5-1 7zM11 12c0-6 3-10 7-9s4 8 0 9c-2 .5-5 .5-7 0zM11 12c6 0 9 3 8 7s-8 4-9 0c-.5-2 0-5 1-7zM11 12c0 6-3 10-7 9s-4-8 0-9c2-.5 5-.5 7 0z" fill="#e8e8e8" stroke="#777" strokeWidth="0.6" /></svg></TaskIcon>
                <TaskIcon><svg width="24" height="24" viewBox="0 0 24 24"><circle cx="10" cy="13" r="7" fill="none" stroke="#ccc" strokeWidth="1.5" /><circle cx="10" cy="13" r="3" fill="none" stroke="#ccc" strokeWidth="1.5" /><path d="M17 1c3 0 3 3 3 5l2 3H13l2-3c0-2 0-5 2-5z" fill="#e0a010" /></svg></TaskIcon>
                <TaskIcon on><svg width="24" height="24" viewBox="0 0 24 24"><path d="M21 14H7c0 5 8 7 13 4v4c-9 3-17-1-17-9S9 1 15 2c5 1 7 6 6 12zM7 11h9c0-5-8-5-9 0z" fill="#0078d7" /></svg></TaskIcon>
                <TaskIcon on><svg width="22" height="20" viewBox="0 0 22 20"><path d="M1 1h8l2 2h10v16H1z" fill="#f0d070" /><path d="M7 11h8v8H7z" fill="#2f9fe0" /></svg></TaskIcon>
                <TaskIcon><svg width="20" height="24" viewBox="0 0 20 24"><path d="M1 6h18v16H1z" fill="#fff" /><path d="M6 6c0-6 8-6 8 0" fill="none" stroke="#fff" /><path d="M6 10h3v3H6zM10 10h4v3h-4zM6 14h3v3H6zM10 14h4v3h-4z" fill="#111" /></svg></TaskIcon>
                <TaskIcon on><svg width="24" height="26" viewBox="0 0 24 26"><path d="M15 1C7 2 2 8 3 15c1 6 8 10 14 8 4-2 5-7 3-11-1-2-3-3-5-2 3 1 3 5 1 7-3 2-7 0-8-4-1-5 3-9 7-12z" fill="#0f93ee" /></svg></TaskIcon>
                <TaskIcon on><svg width="26" height="24" viewBox="0 0 26 24"><ellipse cx="10" cy="10" rx="9" ry="8" fill="#7ad03a" /><ellipse cx="18" cy="15" rx="7" ry="6" fill="#f5f5f5" /></svg></TaskIcon>
                <TaskIcon on><svg width="24" height="24" viewBox="0 0 24 24"><path d="M3 3l12-2v22L3 21z" fill="#2b579a" /><path d="M15 4h7v16h-7z" fill="#fff" /><path d="M16 7h5M16 10h5M16 13h5M16 16h5" stroke="#2b579a" /><text x="4" y="15" fontSize="9" fontWeight="700" fill="#fff" fontFamily="Liberation Sans">W</text></svg></TaskIcon>
                <TaskIcon on active><div className="w-[24px] h-[24px] rounded-[4px] bg-[#2fb560] flex items-center justify-center font-bold text-[15px]">├</div></TaskIcon>
                <TaskIcon on><svg width="24" height="24" viewBox="0 0 24 24"><circle cx="11" cy="13" r="9" fill="#d8d0c0" /><circle cx="7" cy="10" r="2" fill="#d04040" /><circle cx="12" cy="8" r="2" fill="#40a040" /><circle cx="7" cy="16" r="2" fill="#4070d0" /><path d="M12 18L22 1" stroke="#d08a30" strokeWidth="2" /></svg></TaskIcon>
                <TaskIcon on><svg width="24" height="26" viewBox="0 0 24 26"><path d="M15 1C7 2 2 8 3 15c1 6 8 10 14 8 4-2 5-7 3-11-1-2-3-3-5-2 3 1 3 5 1 7-3 2-7 0-8-4-1-5 3-9 7-12z" fill="#0f93ee" /></svg></TaskIcon>
                <TaskIcon on><div className="w-[24px] h-[26px] rounded-[5px] bg-[#0f93ee] flex items-center justify-center"><svg width="16" height="18" viewBox="0 0 16 18"><path d="M8 1v16M2 8h9a2 2 0 0 0 0-4M14 10H5a2 2 0 0 0 0 4" fill="none" stroke="#fff" strokeWidth="1.6" /></svg></div></TaskIcon>
                <TaskIcon on><svg width="18" height="24" viewBox="0 0 18 24"><path d="M0 0h18v24H0z" fill="#fff" /><path d="M2 2h14v5H2zM3 10h3v2H3zM8 10h3v2H8zM13 10h3v2h-3zM3 14h3v2H3zM8 14h3v2H8zM13 14h3v2h-3zM3 18h3v2H3zM8 18h3v2H8zM13 18h3v2h-3z" fill="#111" /></svg></TaskIcon>
            </div>
            <div className="ml-[215px] relative h-full flex-1 flex items-start">
                <div className="w-[586px] h-[23px] bg-[#23221f] text-[#5a5a55] text-[13px] flex items-center pl-[12px] gap-[18px] whitespace-nowrap">
                    <span>第 12 页，共 12 页</span><span>7941 个字</span>
                </div>
                {/* Tray sits over the ghosted window preview */}
                <div className="absolute inset-0 flex items-center">
                    <ChevronUp size={15} className="ml-[297px]" strokeWidth={1.5} />
                    <span className="ml-[12px] w-[13px] h-[17px] bg-gradient-to-b from-[#223] to-[#aaa] border border-white"></span>
                    <span className="ml-[9px] w-[17px] h-[18px] rounded-full bg-[#d8c820] flex items-center justify-center text-[#0a7a1a] font-bold text-[14px] leading-none">+</span>
                    <Wifi size={15} className="ml-[9px]" strokeWidth={1.5} />
                    <span className="ml-[8px] w-[15px] h-[11px] border border-white bg-[#888]"></span>
                    <Volume1 size={17} className="ml-[9px]" strokeWidth={1.5} />
                    <span className="ml-[5px] w-[16px] h-[16px] bg-[#e04030] flex items-center justify-center text-[12px] leading-none">英</span>
                    <span className="ml-[13px] w-[15px] h-[17px] bg-[#dfeaea] flex items-center justify-center"><span className="w-[6px] h-[6px] rounded-full bg-[#e01010]"></span></span>
                    <span className="ml-[17px] w-[64px] flex flex-col items-center text-[13px] leading-[20px] font-['Noto_Sans']">
                        <span>11:54</span>
                        <span>2017/9/2</span>
                    </span>
                    <svg width="16" height="17" viewBox="0 0 16 17" className="ml-[15px]"><path d="M1 1h14v12H9l-2 3v-3H1z" fill="none" stroke="#fff" strokeWidth="1.2" /></svg>
                </div>
            </div>
        </div>
    );
}

export default function App() {
    return (
        <div className="relative w-[1920px] h-[1080px] overflow-hidden flex flex-col bg-[#eee] text-black font-['Noto_Sans_CJK_SC',sans-serif]">
            <TitleBar />
            <MenuBar />
            <MainToolbar />
            <div className="flex-1 flex min-h-0">
                <LeftNav />
                <CenterPanels />
                <div className="flex-1 flex flex-col min-w-0 pt-[2px]">
                    <DrawToolbars />
                    <Canvas />
                    <BottomBar />
                </div>
            </div>
            <StatusBar />
            <Taskbar />

            {/* Green counter bubble, cut off by the window edge */}
            <div className="absolute left-[1902px] top-[155px] w-[44px] h-[44px] rounded-full bg-gradient-to-b from-[#5fd572] to-[#3cc060] border-[3px] border-[#ddd] shadow flex items-center pl-[3px] text-white font-bold text-[13px]">33</div>

            {/* Red markup drawn on top of the screenshot */}
            <svg width="1920" height="1080" viewBox="0 0 1920 1080" className="absolute inset-0 pointer-events-none" fill="none" stroke="#ee1c25" strokeWidth="7" strokeLinecap="round">
                <rect x="139" y="119" width="100" height="120" rx="14" />
                <rect x="14" y="771" width="122" height="35" rx="14" />
                <rect x="451" y="286" width="1424" height="364" rx="14" />
                <path d="M85 768L190 243" strokeWidth="9" />
                <path d="M157 285L190 243L199 300" />
                <path d="M259 201L642 402" />
                <path d="M600 362L642 402L594 411" />
            </svg>
        </div>
    );
}
